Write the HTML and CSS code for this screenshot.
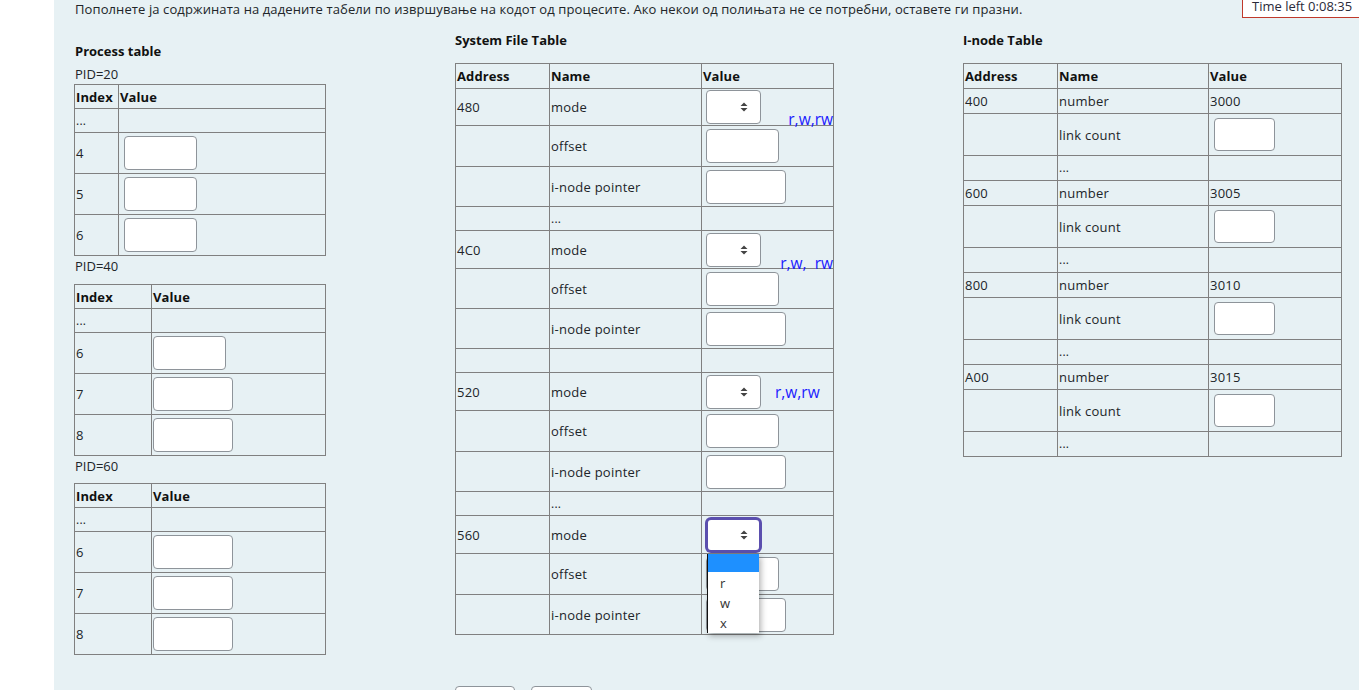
FILE: index.html
```html
<!DOCTYPE html>
<html lang="mk">
<head>
<meta charset="utf-8">
<title>Tables</title>
<link rel="stylesheet" href="styles.css">
</head>
<body>
<div class="timer">Time left 0:08:35</div>
<main class="page">
  <p class="intro">Пополнете ја содржината на дадените табели по извршување на кодот од процесите. Ако некои од полињата не се потребни, оставете ги празни.</p>
  <div class="cols">
    <section class="col col-proc">
      <h3>Process table</h3>
      <div class="pid">PID=20</div>
      <table class="grid proc p1">
        <colgroup><col class="pc1"><col></colgroup>
        <tr class="r24"><th>Index</th><th>Value</th></tr>
        <tr class="r24"><td class="dots">...</td><td></td></tr>
        <tr class="r41"><td>4</td><td><input class="inp w73 m4"></td></tr>
        <tr class="r41"><td>5</td><td><input class="inp w73 m4"></td></tr>
        <tr class="r41"><td>6</td><td><input class="inp w73 m4"></td></tr>
      </table>
      <div class="pid pid-gap">PID=40</div>
      <table class="grid proc p2">
        <colgroup><col class="pc2"><col></colgroup>
        <tr class="r24"><th>Index</th><th>Value</th></tr>
        <tr class="r24"><td class="dots">...</td><td></td></tr>
        <tr class="r41"><td>6</td><td><input class="inp w73"></td></tr>
        <tr class="r41"><td>7</td><td><input class="inp w80"></td></tr>
        <tr class="r41"><td>8</td><td><input class="inp w80"></td></tr>
      </table>
      <div class="pid pid-gap2">PID=60</div>
      <table class="grid proc p2">
        <colgroup><col class="pc2"><col></colgroup>
        <tr class="r24"><th>Index</th><th>Value</th></tr>
        <tr class="r24"><td class="dots">...</td><td></td></tr>
        <tr class="r41"><td>6</td><td><input class="inp w80"></td></tr>
        <tr class="r41"><td>7</td><td><input class="inp w80"></td></tr>
        <tr class="r41"><td>8</td><td><input class="inp w80"></td></tr>
      </table>
    </section>

    <section class="col col-sft">
      <h3>System File Table</h3>
      <table class="grid sft">
        <colgroup><col class="sc1"><col class="sc2"><col></colgroup>
        <tr class="r25"><th>Address</th><th>Name</th><th>Value</th></tr>

        <tr class="r37"><td>480</td><td>mode</td><td class="vcell"><div class="sel"><svg width="8" height="10" viewBox="0 0 8 10"><path d="M0.5 4 L4 0.5 L7.5 4 Z M0.5 6 L4 9.5 L7.5 6 Z" fill="#444"/></svg></div><span class="note note-a">r,w,rw</span></td></tr>
        <tr class="r41"><td></td><td>offset</td><td><input class="inp w73 m3"></td></tr>
        <tr class="r40"><td></td><td>i-node pointer</td><td><input class="inp w80 m3"></td></tr>
        <tr class="r24"><td></td><td class="ind">...</td><td></td></tr>

        <tr class="r38"><td>4C0</td><td>mode</td><td class="vcell"><div class="sel"><svg width="8" height="10" viewBox="0 0 8 10"><path d="M0.5 4 L4 0.5 L7.5 4 Z M0.5 6 L4 9.5 L7.5 6 Z" fill="#444"/></svg></div><span class="note note-b">r,w,  rw</span></td></tr>
        <tr class="r40"><td></td><td>offset</td><td><input class="inp w73 m3"></td></tr>
        <tr class="r40"><td></td><td>i-node pointer</td><td><input class="inp w80 m3"></td></tr>
        <tr class="r24"><td></td><td></td><td></td></tr>

        <tr class="r38"><td>520</td><td>mode</td><td><div class="mode-line"><div class="sel"><svg width="8" height="10" viewBox="0 0 8 10"><path d="M0.5 4 L4 0.5 L7.5 4 Z M0.5 6 L4 9.5 L7.5 6 Z" fill="#444"/></svg></div><span class="note-inline">r,w,rw</span></div></td></tr>
        <tr class="r41"><td></td><td>offset</td><td><input class="inp w73 m3"></td></tr>
        <tr class="r40"><td></td><td>i-node pointer</td><td><input class="inp w80 m3"></td></tr>
        <tr class="r24"><td></td><td class="ind">...</td><td></td></tr>

        <tr class="r38"><td>560</td><td>mode</td><td class="vcell"><div class="sel sel-focus"><svg width="8" height="10" viewBox="0 0 8 10"><path d="M0.5 4 L4 0.5 L7.5 4 Z M0.5 6 L4 9.5 L7.5 6 Z" fill="#444"/></svg></div>
          <div class="dropdown">
            <div class="opt opt-on">&nbsp;</div>
            <div class="opt">r</div>
            <div class="opt">w</div>
            <div class="opt">x</div>
          </div>
        </td></tr>
        <tr class="r41"><td></td><td>offset</td><td><input class="inp w73 m3"></td></tr>
        <tr class="r40"><td></td><td>i-node pointer</td><td><input class="inp w80 m3"></td></tr>
      </table>
    </section>

    <section class="col col-inode">
      <h3>I-node Table</h3>
      <table class="grid inode">
        <colgroup><col class="ic1"><col class="ic2"><col></colgroup>
        <tr class="r25"><th>Address</th><th>Name</th><th>Value</th></tr>
        <tr class="r25"><td>400</td><td>number</td><td class="num">3000</td></tr>
        <tr class="r42"><td></td><td>link count</td><td><input class="inp w61 m4"></td></tr>
        <tr class="r25"><td></td><td class="ind">...</td><td></td></tr>
        <tr class="r25"><td>600</td><td>number</td><td class="num">3005</td></tr>
        <tr class="r42"><td></td><td>link count</td><td><input class="inp w61 m4"></td></tr>
        <tr class="r25"><td></td><td class="ind">...</td><td></td></tr>
        <tr class="r25"><td>800</td><td>number</td><td class="num">3010</td></tr>
        <tr class="r42"><td></td><td>link count</td><td><input class="inp w61 m4"></td></tr>
        <tr class="r25"><td></td><td class="ind">...</td><td></td></tr>
        <tr class="r25"><td>A00</td><td>number</td><td class="num">3015</td></tr>
        <tr class="r42"><td></td><td>link count</td><td><input class="inp w61 m4"></td></tr>
        <tr class="r25"><td></td><td class="ind">...</td><td></td></tr>
      </table>
    </section>
  </div>
  <div class="buttons">
    <button class="btn b1" type="button"></button>
    <button class="btn b2" type="button"></button>
  </div>
</main>
</body>
</html>
```

FILE: styles.css
```css
html, body {
  margin: 0;
  padding: 0;
  overflow: hidden;
}
body {
  font-family: "Open Sans", "Noto Sans", sans-serif;
  font-size: 13px;
  color: #212529;
  background: #ffffff;
}
.page {
  margin-left: 54px;
  background: #e7f1f4;
  padding: 0 0 60px 21px;
  min-height: 740px;
  box-sizing: border-box;
}
.intro {
  margin: 0;
  line-height: 18px;
  font-size: 13px;
  letter-spacing: 0.1px;
}
.timer {
  position: absolute;
  top: -9px;
  left: 1242px;
  width: 150px;
  padding: 5px 9px 2px;
  line-height: 18px;
  font-size: 13px;
  border: 1px solid #c0392b;
  background: #ffffff;
  color: #2a2a3a;
  font-family: "Open Sans", sans-serif;
}
.cols {
  display: flex;
  margin-top: 12px;
  align-items: flex-start;
}
.col-proc { width: 380px; flex: none; }
.col-sft { width: 508px; flex: none; }
.col-inode { flex: none; }
.col h3 {
  margin: 0;
  font-size: 13px;
  line-height: 20px;
  font-weight: 700;
  color: #111;
}
.col-proc h3 {
  margin-top: 11px;
}
.pid {
  margin-top: 3px;
  line-height: 20px;
}
.pid-gap {
  margin-top: 0;
  margin-bottom: 8px;
}
.pid-gap2 {
  margin-top: 0;
  margin-bottom: 7px;
}
.col-proc table {
  margin-left: -1px;
}
.col-sft table,
.col-inode table {
  margin-top: 13px;
}

.grid {
  border-collapse: collapse;
  table-layout: fixed;
}
.grid th,
.grid td {
  border: 1px solid #808080;
  padding: 0 1px;
  text-align: left;
  vertical-align: middle;
  line-height: 18px;
  white-space: nowrap;
  letter-spacing: 0.25px;
}
.grid th {
  font-weight: 700;
  color: #111;
  letter-spacing: 0.1px;
}
.proc { width: 252px; }
.pc1 { width: 44px; }
.pc2 { width: 77px; }
.sft { width: 379px; }
.sc1 { width: 94px; }
.sc2 { width: 152px; }
.inode { width: 379px; }
.ic1 { width: 94px; }
.ic2 { width: 151px; }

.r24 { height: 24px; }
.r25 { height: 25px; }
.r37 { height: 37px; }
.r38 { height: 38px; }
.r40 { height: 40px; }
.r41 { height: 41px; }
.r42 { height: 42px; }

.dots {
  vertical-align: bottom;
  line-height: 16px;
  font-size: 12px;
}
.ind {
  padding-left: 6px;
  font-size: 12px;
}
.num {
  padding-left: 6px;
}

.inp {
  display: block;
  box-sizing: border-box;
  height: 34px;
  margin: 0;
  border: 1px solid #8e949a;
  border-radius: 4px;
  background: #ffffff;
  padding: 0;
}
.w73 { width: 73px; }
.w80 { width: 80px; }
.w61 { width: 61px; height: 33px; }
.m3 { margin-left: 3px; }
.m4 { margin-left: 4px; }

.vcell {
  position: relative;
}
.sel {
  box-sizing: border-box;
  width: 55px;
  height: 34px;
  margin-left: 3px;
  border: 1px solid #8e949a;
  border-radius: 4px;
  background: #ffffff;
  display: flex;
  align-items: center;
  justify-content: flex-end;
  padding-right: 12px;
}
.sel svg { display: block; }
.sel-focus {
  border: 2px solid #5b4fae;
  box-shadow: 0 0 0 1px #5b4fae;
  border-radius: 5px;
  padding-right: 11px;
}
.mode-line {
  display: flex;
  align-items: center;
}
.note-inline,
.note {
  color: #1a1aff;
  font-size: 15.5px;
  line-height: 20px;
  letter-spacing: 0;
}
.note-inline {
  margin-left: 14px;
}
.note {
  position: absolute;
  right: 0;
  white-space: pre;
}
.note-a { top: 20px; }
.note-b { top: 22px; }

.dropdown {
  position: absolute;
  top: 38px;
  left: 5px;
  width: 51px;
  height: 79px;
  background: #ffffff;
  border-left: 1px solid #111;
  box-shadow: 2px 3px 6px rgba(0, 0, 0, 0.3);
  z-index: 5;
}
.opt {
  height: 20px;
  line-height: 20px;
  padding-left: 12px;
  font-size: 13px;
  color: #333;
}
.opt-on {
  height: 18px;
  background: #1e90ff;
  margin-bottom: 1px;
}

.buttons {
  display: flex;
  gap: 16px;
  margin-top: 31px;
  margin-left: 380px;
}
.btn {
  height: 34px;
  border: 1px solid #8e949a;
  border-radius: 4px;
  background: #ffffff;
  padding: 0;
}
.b1 { width: 60px; }
.b2 { width: 61px; }
```
